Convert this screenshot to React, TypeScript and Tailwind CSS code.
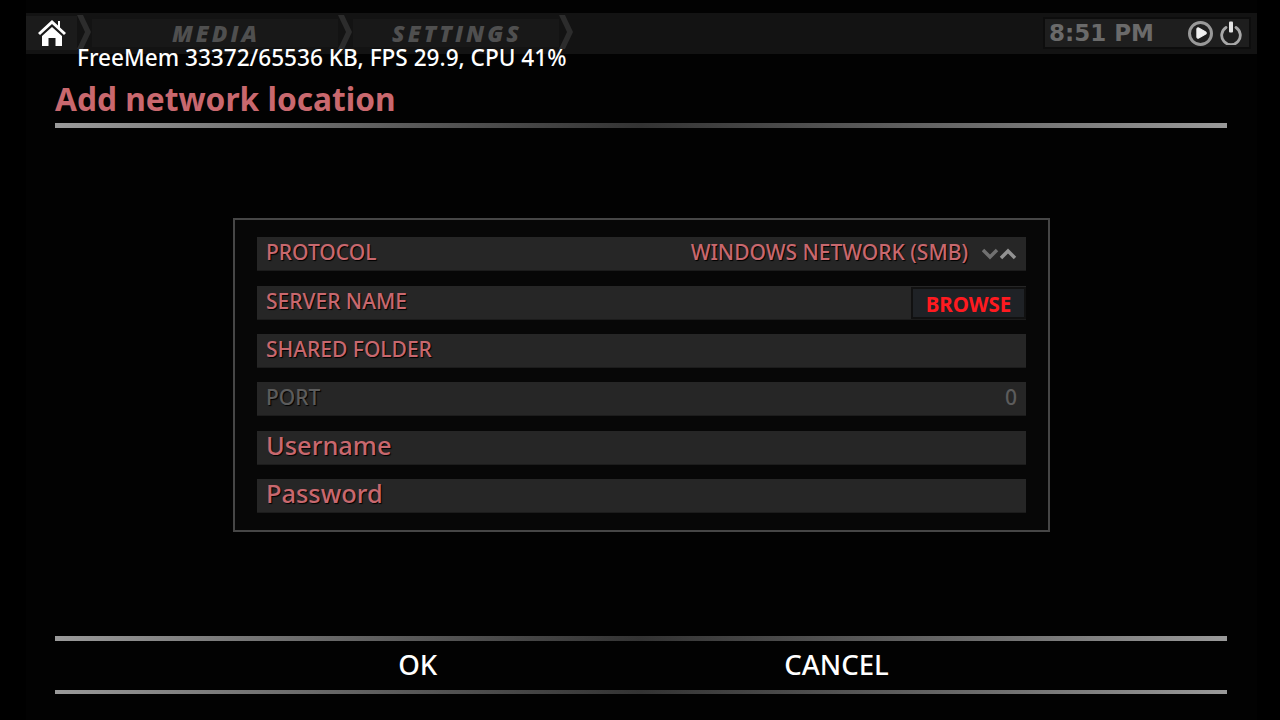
import { Play } from 'lucide-react';

const FONT = "font-['Noto_Sans','Open_Sans',sans-serif]";

function Chevron() {
  return (
    <svg width="15" height="34" viewBox="0 0 15 34" className="shrink-0 -mt-[3px]">
      <path d="M0 0 L6 0 L14 17 L6 34 L0 34 L8 17 Z" fill="#2c2c2c" />
    </svg>
  );
}

function HomeIcon() {
  return (
    <svg width="28" height="27" viewBox="0 0 28 27">
      <path d="M14 1 L20 6.5 L20 2 L22 2 L22 8.5 L28 14 L26 16 L14 5 L2 16 L0 14 Z" fill="#fff" />
      <path d="M14 8 L24 17 L24 27 L17.5 27 L17.5 19 L10.5 19 L10.5 27 L4 27 L4 17 Z" fill="#fff" />
    </svg>
  );
}

function PowerIcon() {
  return (
    <svg width="22" height="24" viewBox="0 0 22 24" className="ml-[7px] shrink-0">
      <path d="M6 6.5 A9.3 9.3 0 1 0 16 6.5" fill="none" stroke="#a8a8a8" strokeWidth="2.8" strokeLinecap="round" />
      <rect x="9" y="0.5" width="4" height="11" rx="1" fill="#e4e4e4" />
    </svg>
  );
}

function Crumb({ label, width }: { label: string; width: string }) {
  return (
    <div className={`${width} h-[28px] -mt-[1px] flex items-center justify-center bg-[#181818]`}>
      <span className="font-['Open_Sans',sans-serif] pl-[2px] italic font-extrabold text-[23px] leading-none tracking-[3px] text-[#4f4f4f]">
        {label}
      </span>
    </div>
  );
}

function Rule({ className }: { className: string }) {
  return (
    <div
      className={`${className} ml-[29px] mr-[30px] bg-gradient-to-r from-[#9a9a9a] via-[#333333] to-[#9a9a9a]`}
    />
  );
}

function Row({
  label,
  large,
  dim,
  children,
}: {
  label: string;
  large?: boolean;
  dim?: boolean;
  children?: React.ReactNode;
}) {
  const color = dim ? 'text-[#5c5c5c]' : 'text-[#c8686e]';
  const size = large ? 'text-[25.4px] pb-[2px]' : 'text-[21px]';
  return (
    <div className="h-[34px] bg-[#262626] flex items-center pl-[9px] pb-[2px] border-b border-[#1c1c1c]">
      <span className={`${color} ${size} font-medium leading-none [text-shadow:1px_1px_1px_#000]`}>{label}</span>
      {children}
    </div>
  );
}

export default function App() {
  return (
    <div className={`${FONT} relative w-[1280px] h-[720px] overflow-hidden bg-black`}>
      <div className="h-full ml-[26px] mr-[23px] pt-[13px] flex flex-col bg-[#020202]">
        {/* Top bar */}
        <div className="h-[41px] shrink-0 bg-[#131313] flex items-center">
          <div className="w-[51px] h-[34px] -mt-[2px] flex items-center justify-center bg-[#1b1b1b]">
            <HomeIcon />
          </div>
          <Chevron />
          <Crumb label="MEDIA" width="w-[246px]" />
          <Chevron />
          <Crumb label="SETTINGS" width="w-[206px]" />
          <Chevron />
          <div className="ml-auto mr-[6px] w-[208px] h-[32px] -mt-[1px] border-2 border-[#0d0d0d] bg-[#1e1e1e] flex items-center">
            <span className="ml-[4px] w-[136px] font-['DejaVu_Sans',sans-serif] font-bold text-[23px] leading-none text-[#6a6a6a] whitespace-nowrap">
              8:51 PM
            </span>
            <span className="ml-[3px] w-[25px] h-[25px] shrink-0 rounded-full border-[3px] border-[#999] flex items-center justify-center">
              <Play size={14} fill="#f0f0f0" stroke="#f0f0f0" />
            </span>
            <PowerIcon />
          </div>
        </div>

        {/* Title */}
        <h1 className="mt-[25px] ml-[29px] text-[31.7px] leading-[40px] font-bold text-[#c9686e] whitespace-nowrap">
          Add network location
        </h1>
        <Rule className="mt-[4px] h-[5px] shrink-0" />

        {/* Dialog */}
        <div className="mt-[90px] ml-[207px] w-[817px] h-[314px] shrink-0 border-2 border-[#464646] bg-[#070707] pl-[22px] pr-[22px] pt-[17.2px] flex flex-col gap-[14.4px]">
          <Row label="PROTOCOL">
            <span className="ml-auto text-[21px] font-medium leading-none text-[#c8686e] [text-shadow:1px_1px_1px_#000]">
              WINDOWS NETWORK (SMB)
            </span>
            <svg width="36" height="12" viewBox="0 0 36 12" className="ml-[14px] mr-[8px] mt-[2px] shrink-0">
              <path d="M1 2 L8 9 L15 2" fill="none" stroke="#707070" strokeWidth="3.5" />
              <path d="M19 10 L26 3 L33 10" fill="none" stroke="#929292" strokeWidth="3.5" />
            </svg>
          </Row>
          <Row label="SERVER NAME">
            <span className="ml-auto mt-[3px] pt-[3px] h-[32px] w-[115px] border-2 border-[#111] bg-[#1f2226] flex items-center justify-center text-[20.5px] font-bold leading-none text-[#ff1a20]">
              BROWSE
            </span>
          </Row>
          <Row label="SHARED FOLDER" />
          <Row label="PORT" dim>
            <span className="ml-auto mr-[9px] text-[21px] font-medium leading-none text-[#5c5c5c]">0</span>
          </Row>
          <Row label="Username" large />
          <Row label="Password" large />
        </div>

        {/* Buttons */}
        <Rule className="mt-[104px] h-[5px] shrink-0" />
        <div className="h-[49px] shrink-0 text-white text-[27.6px] font-medium leading-none">
          <div className="flex h-full items-center justify-center gap-[347px] pl-[4px] pb-[2px]">
            <span>OK</span>
            <span>CANCEL</span>
          </div>
        </div>
        <Rule className="h-[4px] shrink-0" />
      </div>

      {/* Debug overlay */}
      <div className="absolute left-[77px] top-[44px] text-[22.6px] leading-[28px] font-medium text-white whitespace-nowrap">
        FreeMem 33372/65536 KB, FPS 29.9, CPU 41%
      </div>
    </div>
  );
}
